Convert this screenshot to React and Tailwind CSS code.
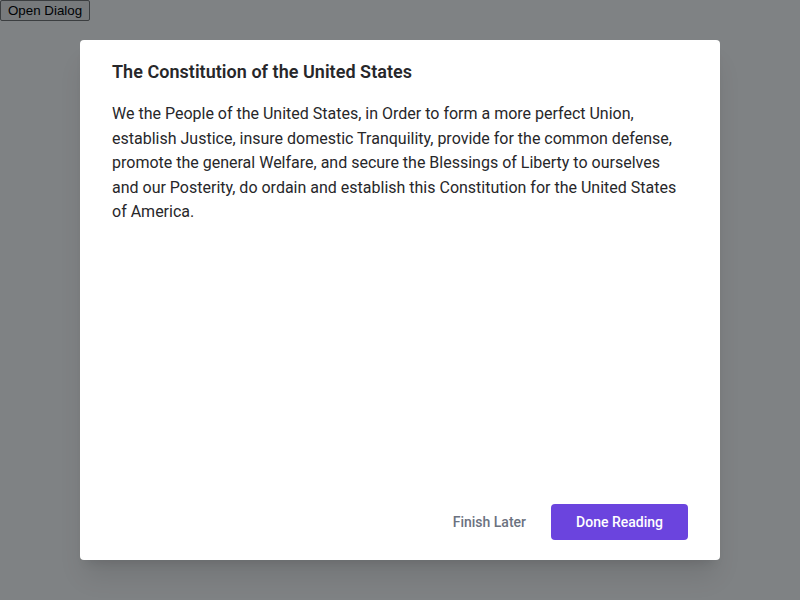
export default function App() {
  return (
    <div className="relative h-[600px] w-[800px] bg-white" style={{ fontFamily: "Roboto, 'Noto Sans', sans-serif" }}>
      <button
        className="block h-[21px] rounded-[2px] border border-[#767676] bg-[#efefef] px-[7px] text-[13.33px] leading-[17px] text-black"
        style={{ fontFamily: "'Liberation Sans', Arial, sans-serif" }}
      >
        Open Dialog
      </button>
      <div className="absolute inset-0 flex items-center justify-center bg-[rgba(0,5,10,0.5)]">
        <div className="flex h-[520px] w-[640px] flex-col rounded-[4px] bg-white px-8 pb-5 pt-[21px] shadow-xl">
          <h2 className="text-[18px] font-semibold leading-[22px] tracking-[0.002em] text-[#27272a]">
            The Constitution of the United States
          </h2>
          <p className="mt-[19px] text-[16px] leading-[24.5px] text-[#27272a]">
            We the People of the United States, in Order to form a more perfect Union, establish Justice, insure domestic Tranquility, provide for the common defense, promote the general Welfare, and secure the Blessings of Liberty to ourselves and our Posterity, do ordain and establish this Constitution for the United States of America.
          </p>
          <div className="mt-auto flex items-center justify-end gap-[9px]">
            <button className="h-9 rounded-[4px] px-4 text-[14px] font-medium text-[#6b7280]">Finish Later</button>
            <button className="h-9 w-[137px] rounded-[4px] bg-[#6b44de] text-[14px] font-medium text-white">Done Reading</button>
          </div>
        </div>
      </div>
    </div>
  );
}
